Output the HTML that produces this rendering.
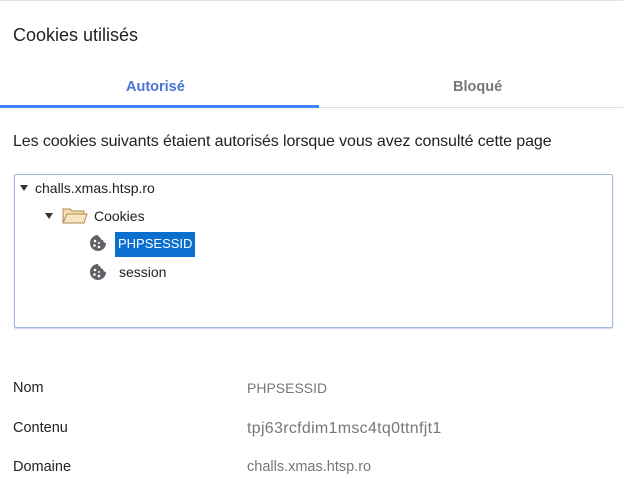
<!DOCTYPE html>
<html><head><meta charset="utf-8"><style>
html,body{margin:0;padding:0;width:623px;height:490px;overflow:hidden;background:#fff;font-family:"Liberation Sans",sans-serif;color:#222}
.a{position:absolute;white-space:nowrap}
</style></head><body>
<div class="a" style="left:0;top:0;width:623px;height:1px;background:#e4e4e4"></div>
<div class="a" style="left:13px;top:25px;font-size:18px;color:#222">Cookies utilisés</div>
<div class="a" style="left:126px;top:79px;font-size:14.5px;font-weight:bold;color:#4a74d6">Autorisé</div>
<div class="a" style="left:453px;top:79px;font-size:14.5px;font-weight:bold;color:#777">Bloqué</div>
<div class="a" style="left:0;top:107px;width:623px;height:1px;background:#ddd"></div>
<div class="a" style="left:0;top:105px;width:319px;height:3px;background:#4285f4"></div>
<div class="a" style="left:13px;top:133px;font-size:16px;letter-spacing:-0.1px;color:#222">Les cookies suivants étaient autorisés lorsque vous avez consulté cette page</div>
<div class="a" style="left:14px;top:174px;width:597px;height:152px;border:1px solid #9fb6e0;border-radius:2px;box-shadow:0 1px 1px #c8d4ea"></div>
<div class="a" style="left:20px;top:185px;width:0;height:0;border-left:4px solid transparent;border-right:4px solid transparent;border-top:6px solid #333"></div>
<div class="a" style="left:35px;top:180px;font-size:14px">challs.xmas.htsp.ro</div>
<div class="a" style="left:45px;top:213px;width:0;height:0;border-left:4px solid transparent;border-right:4px solid transparent;border-top:6px solid #333"></div>
<svg class="a" style="left:62px;top:206px" width="26" height="18" viewBox="0 0 26 18"><path d="M1 3h7l2 2h12v12H1z" fill="#f5deb0" stroke="#b08a50"/><path d="M1 17l4-9h20l-3 9z" fill="#f8e6c2" stroke="#b08a50"/></svg>
<div class="a" style="left:94px;top:208px;font-size:14px">Cookies</div>
<svg class="a" style="left:89px;top:234px" width="18" height="18" viewBox="0 0 18 18"><path d="M9 1a8 8 0 1 0 8 8a3 3 0 0 1-3-3a3 3 0 0 1-3-3a2 2 0 0 1-2-2z" fill="#5f6368"/><circle cx="6" cy="7" r="1.3" fill="#fff"/><circle cx="5.5" cy="11.5" r="1.3" fill="#fff"/><circle cx="10" cy="13" r="1.3" fill="#fff"/><circle cx="10" cy="9" r="1" fill="#fff"/></svg>
<div class="a" style="left:115px;top:232px;width:80px;height:25px;background:#0b6fd0"></div>
<div class="a" style="left:118px;top:236px;font-size:13px;color:#fff">PHPSESSID</div>
<svg class="a" style="left:89px;top:263px" width="18" height="18" viewBox="0 0 18 18"><path d="M9 1a8 8 0 1 0 8 8a3 3 0 0 1-3-3a3 3 0 0 1-3-3a2 2 0 0 1-2-2z" fill="#5f6368"/><circle cx="6" cy="7" r="1.3" fill="#fff"/><circle cx="5.5" cy="11.5" r="1.3" fill="#fff"/><circle cx="10" cy="13" r="1.3" fill="#fff"/><circle cx="10" cy="9" r="1" fill="#fff"/></svg>
<div class="a" style="left:119px;top:264px;font-size:14px">session</div>
<div class="a" style="left:13px;top:380px;font-size:14.5px">Nom</div>
<div class="a" style="left:247px;top:380px;font-size:14px;color:#777">PHPSESSID</div>
<div class="a" style="left:13px;top:420px;font-size:14.5px">Contenu</div>
<div class="a" style="left:247px;top:420px;font-size:16px;letter-spacing:0.3px;color:#777">tpj63rcfdim1msc4tq0ttnfjt1</div>
<div class="a" style="left:13px;top:459px;font-size:14.5px">Domaine</div>
<div class="a" style="left:247px;top:459px;font-size:14.5px;color:#777">challs.xmas.htsp.ro</div>
</body></html>
